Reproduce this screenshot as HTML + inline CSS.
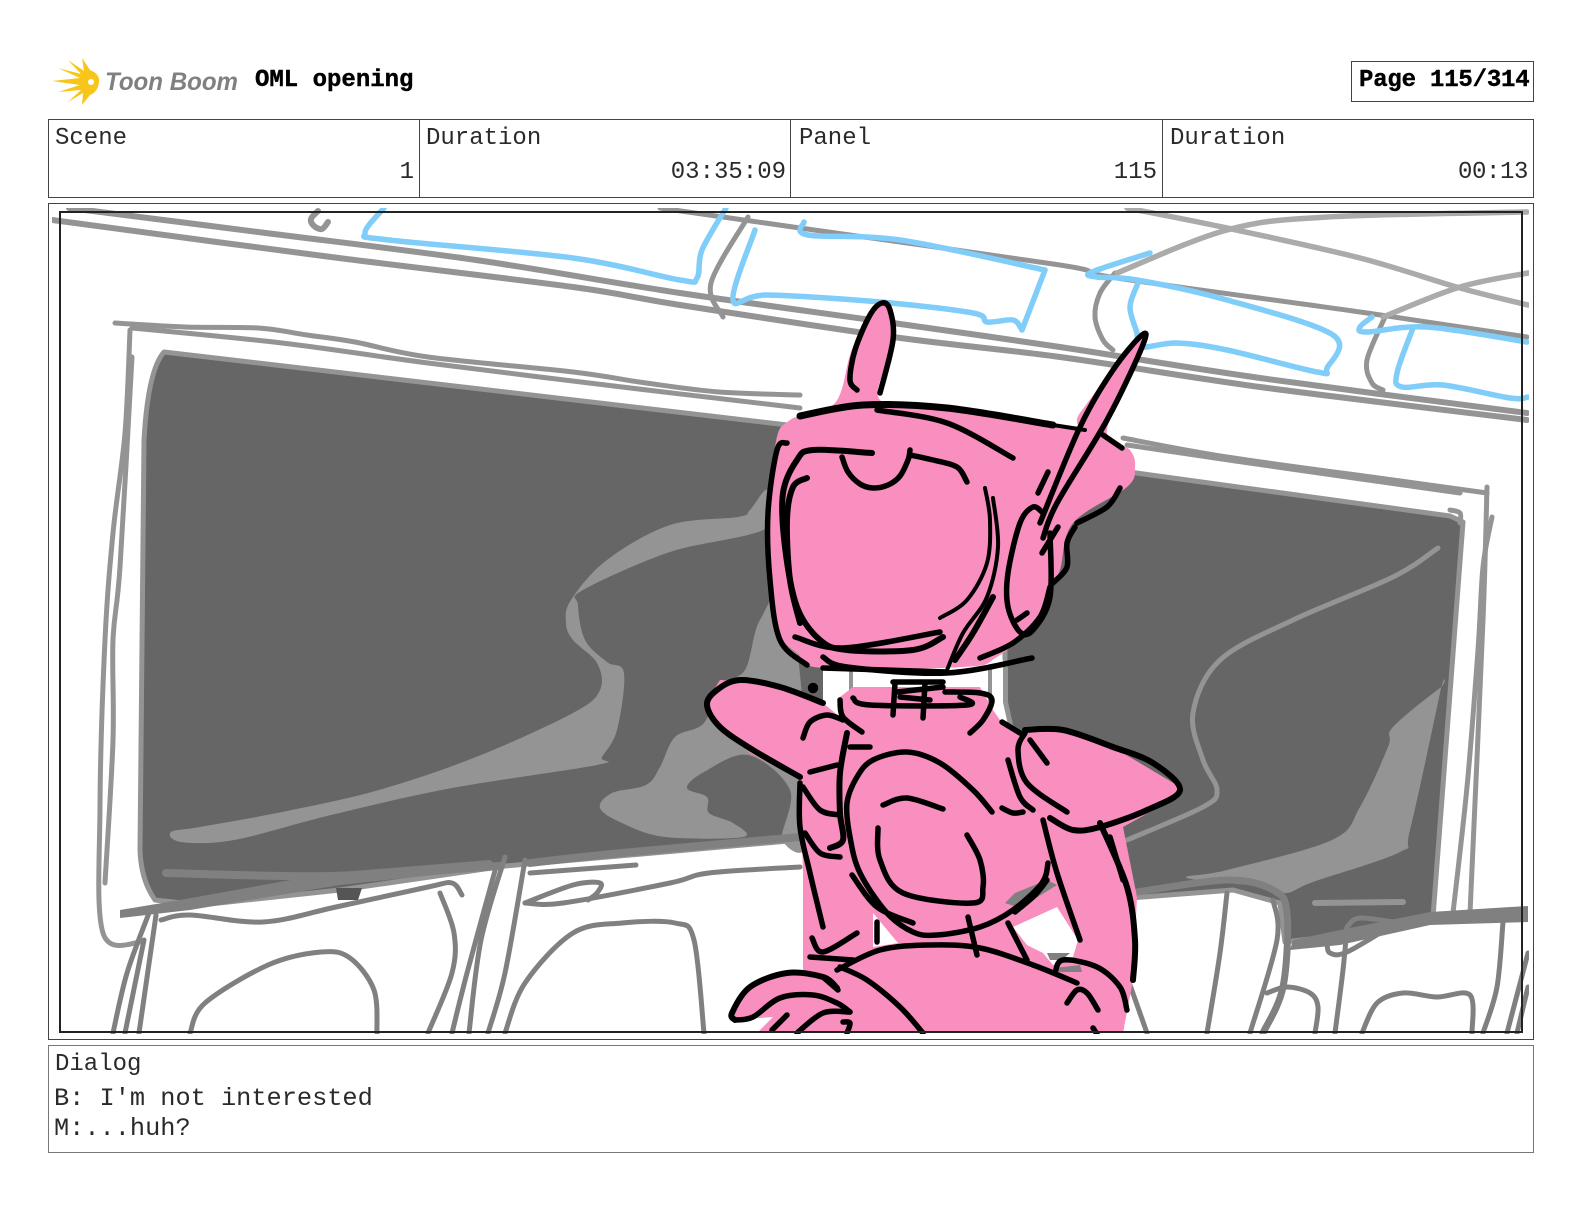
<!DOCTYPE html>
<html><head><meta charset="utf-8"><title>OML opening</title>
<style>
html,body{margin:0;padding:0;background:#fff;width:1584px;height:1224px;overflow:hidden}
body{position:relative;font-family:"Liberation Mono",monospace;color:#2a2a2a}
.b{position:absolute;box-sizing:border-box;border:1px solid #444}
.t{position:absolute;font-size:24px;line-height:28px;white-space:pre}
.h{font-weight:bold;color:#000;-webkit-text-stroke:.4px #000}
svg{position:absolute;left:0;top:0}
</style></head><body>
<svg id="logo" width="260" height="120" viewBox="0 0 260 120" style="left:0;top:0">
<path fill="#F8C61A" d="M52 81 80 78 58 68 81 74 68 60 84 71 82 58 90 70Q100 74 99 82 98 92 90 95L82 105 83 93 68 102 81 90 58 92 80 85Z"/>
<circle cx="91" cy="82" r="3" fill="#fff"/>
<text x="105" y="90" font-family="Liberation Sans" font-size="25" font-weight="bold" font-style="italic" fill="#808080" textLength="133" lengthAdjust="spacingAndGlyphs">Toon Boom</text>
</svg>
<div class="t h" style="left:255px;top:67px">OML opening</div>
<div class="b" style="left:1351px;top:61px;width:183px;height:41px"></div>
<div class="t h" style="left:1359px;top:67px;letter-spacing:-.2px">Page 115/314</div>

<div class="b" style="left:48px;top:119px;width:1486px;height:79px"></div>
<div style="position:absolute;left:419px;top:119px;width:1px;height:79px;background:#444"></div>
<div style="position:absolute;left:790px;top:119px;width:1px;height:79px;background:#444"></div>
<div style="position:absolute;left:1162px;top:119px;width:1px;height:79px;background:#444"></div>
<div class="t" style="left:55px;top:125px">Scene</div>
<div class="t" style="left:426px;top:125px">Duration</div>
<div class="t" style="left:799px;top:125px">Panel</div>
<div class="t" style="left:1170px;top:125px">Duration</div>
<div class="t" style="right:1170px;top:159px">1</div>
<div class="t" style="right:798px;top:159px">03:35:09</div>
<div class="t" style="right:427px;top:159px">115</div>
<div class="t" style="right:56px;top:159px;letter-spacing:-.4px">00:13</div>

<div class="b" style="left:48px;top:203px;width:1486px;height:837px"></div>
<svg id="art" width="1584" height="1224" viewBox="0 0 1584 1224">
<defs><clipPath id="c"><rect x="52" y="208" width="1477" height="826"/></clipPath></defs>
<g clip-path="url(#c)" fill="none" stroke-linecap="round" stroke-linejoin="round">

<!-- windows -->
<g fill="#666" stroke="#949494" stroke-width="5">
<path d="M164 352 830 430 823 838 505 866 340 890 200 905 155 900Q141 880 140 850L144 440Q148 370 164 352Z"/>
<path d="M1005 455 1450 516 1463 522 1433 917 1343 935 1285 942 1280 903 1233 890 1130 898 1050 900 1005 700Z"/>
</g>
<path fill="#fff" stroke="none" d="M823 660H1003V735H823Z"/>
<g stroke="#949494" stroke-width="4">
<path d="M851 668V705"/><path d="M990 668V705"/><path d="M1006 668V705"/>
</g>
<g fill="#949494" stroke="none">
<path class="s" d="M767 490 750 510 738 517 670 525 607 560 571 600 566 623 573 640 597 663 600 690 573 713 476 757 379 790 282 812 200 827 171 832 181 842 234 840 331 815 452 788 597 765 602 757 617 730 624 673 607 662 585 640 578 605 583 590 670 552 767 528Z"/>
<path class="s" d="M790 600 760 620 745 670 720 685 704 723 675 737 660 767 646 785 612 793 600 808 622 823 665 837 743 837 733 823 709 813 707 797 687 788 704 772 748 755 790 790 782 840 810 830Z"/>
<path class="s" d="M1440 688 1393 727 1388 747 1360 807 1332 840 1227 870 1187 878 1267 887 1287 893 1313 882 1400 852 1410 830 1440 693Z"/>
</g>
<g stroke="#949494" stroke-width="5">
<path class="s" d="M1438 548 1393 577 1293 620 1220 660 1193 713 1203 760 1217 790 1203 807 1127 840"/>
<path class="s" stroke-width="6" d="M1315 903 1403 902"/>
</g>

<!-- rails -->
<g stroke="#949494" stroke-width="6">
<path class="s" d="M52 220 331 257 573 287 680 305 893 337 1060 357 1260 387 1527 420"/>
<path class="s" d="M69 208 258 232 476 260 680 293 893 323 1060 347 1260 378 1527 413"/>
<path class="s" stroke-width="5" d="M660 208 800 228 1060 265 1117 278 1360 312 1527 337"/>
<path class="s" stroke-width="5" d="M1115 273 1100 293 1095 317 1103 340 1113 350"/>
<path class="s" stroke-width="5" d="M1385 317 1367 360 1372 383 1383 390"/>
<path class="s" stroke-width="5" d="M748 217 711 283 723 317"/>
<path class="s" d="M318 211 311 219 314 226 322 229 328 222"/>
</g>
<g stroke="#ababab" stroke-width="5.5">
<path class="s" d="M1117 273 1227 230 1327 217 1527 212"/>
<path class="s" d="M1127 208 1227 228 1360 258 1460 288 1528 305"/>
<path class="s" d="M1383 317 1460 287 1528 273"/>
</g>
<g stroke="#7FCDF8" stroke-width="5.5">
<path class="s" d="M384 208 365 233 389 240 573 258 680 280 697 278 702 250 726 208"/>
<path class="s" d="M755 230 733 300 767 295 880 302 973 313 987 322 1013 320 1022 330"/>
<path d="M1022 330 1045 270"/>
<path class="s" d="M1045 270 900 240 808 235 804 222"/>
<path class="s" d="M1150 253 1092 272 1097 277 1137 280 1227 300 1333 335 1327 368 1317 372 1227 350 1177 343 1140 347 1137 333 1130 307 1138 283"/>
<path class="s" d="M1372 317 1360 327 1367 332 1427 327 1527 342"/>
<path class="s" d="M1413 328 1397 373 1402 387 1443 385 1510 398 1528 397"/>
</g>

<!-- window frames -->
<g stroke="#949494" stroke-width="5">
<path class="s" d="M115 323 185 327 258 328 307 335 355 342 428 357 573 372 646 383 719 392 800 395"/>
<path class="s" d="M132 328 282 343 428 363 622 387 800 408"/>
<path class="s" d="M130 330 125 433 113 533 105 640 100 807 103 933 142 942"/>
<path class="s" d="M132 357 120 567 113 640 113 740 105 883"/>
<path class="s" d="M1123 438 1227 457 1393 480 1487 493"/>
<path class="s" d="M1127 445 1277 467 1460 493"/>
<path class="s" d="M1487 487 1483 620 1470 913"/>
<path class="s" d="M1492 517 1483 567 1478 650 1467 787 1453 913"/>
<path class="s" d="M1450 510 1460 513 1460 523"/>
</g>

<!-- seats -->
<g stroke="#808080" stroke-width="5">
<path class="s" stroke-width="8" d="M166 873 330 876 500 866"/>
<path fill="#808080" stroke="none" d="M120 910 180 900 330 873 490 860 500 868 340 885 190 910 120 918Z"/>
<path class="s" stroke-width="8" d="M530 863 622 853 800 837"/>
<path class="s" d="M161 920 190 915 263 922 336 907 428 887 452 883 462 895"/>
<path class="s" d="M440 893 454 933 452 973 428 1033"/>
<path class="s" d="M149 913 127 973 113 1033"/>
<path class="s" d="M156 915 139 1033"/>
<path class="s" d="M144 940 125 1033"/>
<path class="s" d="M190 1033 205 1003 268 965 321 952 350 958 374 990 377 1033"/>
<path class="s" d="M496 867 467 973 452 1033"/>
<path class="s" d="M505 857 481 940 469 1033"/>
<path class="s" d="M525 860 505 973 488 1033"/>
<path class="s" d="M525 903 563 903 670 883 709 873 800 867"/>
<path class="s" d="M525 903 573 885 600 883 597 893 588 900"/>
<path class="s" d="M530 873 636 865"/>
<path class="s" d="M505 1033 525 983 573 933 622 923 675 923 694 940 704 1033"/>
<path class="s" d="M1227 893 1220 953 1207 1033"/>
<path class="s" stroke-width="7" d="M1137 892 1227 880 1273 890 1287 913 1283 987 1263 1033"/>
<path class="s" d="M1273 900 1277 940 1250 1033"/>
<path class="s" d="M1347 927 1343 970 1335 1033"/>
<path class="s" d="M1327 943 1330 953 1347 952 1393 925"/>
<path class="s" d="M1347 927 1360 918 1400 923"/>
<path class="s" d="M1267 993 1287 987 1310 993 1318 1007 1315 1033"/>
<path class="s" d="M1362 1033 1377 1003 1403 993 1437 997 1470 995 1472 1033"/>
<path class="s" d="M1503 922 1497 987 1483 1033"/>
<path class="s" d="M1528 953 1507 1033"/>
<path class="s" d="M1528 987 1517 1033"/>
<path class="s" d="M1130 985 1147 1033"/>
<path fill="#808080" stroke="none" d="M1528 906V922L1430 925 1340 945 1290 950 1293 940 1340 930 1430 912Z"/>
<path fill="#555" stroke="none" d="M336 888H362L358 900H338Z"/>
</g>

<!-- pink figure -->
<g fill="#F88FBF" stroke="none">
<path class="s" d="M835 403 853 347 883 303 893 313 893 347 880 400 947 407 1070 427 1080 413 1137 337 1142 347 1107 430 1130 450 1135 467 1127 487 1073 523 1060 570 1050 587 1040 620 997 657 963 667 823 668 797 653 777 627 768 547 775 447 790 420Z"/>
<path d="M840 697 853 687H980L993 710 1000 720 1020 733 1047 728 1113 747 1180 787 1177 797 1123 827 1137 897 1133 980 1123 1033H757L773 1017 733 1020 733 1007 753 983 803 970 803 873 800 780 750 753 710 717 707 700 720 680 763 682 823 703 840 717Z"/>
</g>
<g stroke="none">
<path fill="#fff" d="M1013 927 1057 907 1078 940 1073 957 1053 965 1043 953 1027 945Z"/>
<path fill="#fff" d="M873 913 898 943 873 947Z"/>
<path fill="#808080" d="M1005 903 1015 893 1047 880 1057 885 1020 908Z"/>
<path fill="#808080" d="M1047 953H1070L1062 960H1050ZM1055 968 1080 965 1082 972H1060Z"/>
</g>

<!-- black ink -->
<g stroke="#000" stroke-width="5.5">
<path class="s" d="M857 390 850 380 855 350 870 315 882 303 890 310 893 340 880 393"/>
<path class="s" stroke-width="7" d="M800 416 863 405 947 408 1053 425"/>
<path class="s" stroke-width="4" d="M1053 425 1085 430"/>
<path class="s" d="M877 410 947 423 1013 458"/>
<path class="s" d="M1040 523 1080 427 1113 370 1142 335 1142 347 1107 420 1057 503 1043 538"/>
<path class="s" d="M787 443 777 450 768 513 770 580 780 640 807 665"/>
<path class="s" stroke-width="6" d="M872 453 813 450 797 460 783 493 785 547 797 607 820 640 847 650 913 650 943 637"/>
<path class="s" stroke-width="6" d="M807 478 793 487 787 520 790 580 800 623"/>
<path class="s" d="M795 637 843 648 940 632"/>
<path class="s" d="M823 657 847 667 947 673 1032 658"/>
<path class="s" d="M842 457 848 472 860 484 873 488 888 485 900 476 908 460 910 450"/>
<path class="s" d="M910 455 933 460 957 467 967 482"/>
<path class="s" stroke-width="4" d="M985 488 990 520 987 563 967 600 940 618"/>
<path class="s" stroke-width="4" d="M993 498 998 547 987 597 963 633 947 670"/>
<path class="s" stroke-width="6" d="M993 597 973 633 955 660"/>
<path class="s" d="M1043 513 1033 507 1020 523 1008 573 1008 607 1020 632 1033 630 1050 597 1050 533"/>
<path class="s" d="M1027 613 1017 620"/>
<path class="s" d="M1050 587 1040 617 1013 643 980 658"/>
<path class="s" d="M1042 553 1058 527"/>
<path class="s" d="M1075 527 1067 543 1067 567 1053 583"/>
<path class="s" d="M1120 488 1107 507 1077 523"/>
<path class="s" d="M1103 435 1122 448"/>
<path class="s" d="M1048 472 1038 493"/>
<!-- neck -->
<path class="s" d="M853 698 870 705 967 705 960 697"/>
<path class="s" d="M945 692 980 693 992 700 983 720 970 733"/>
<path class="s" d="M840 700 843 717 862 732"/>
<path class="s" d="M895 683 893 715"/>
<path class="s" d="M925 683 923 718"/>
<path class="s" d="M893 682 943 682"/>
<path class="s" d="M897 692 943 687"/>
<path class="s" d="M900 697 930 700"/>
<path class="s" d="M823 668 947 672"/>
<circle cx="813" cy="688" r="2.5" fill="#000"/>
<!-- left arm -->
<path class="s" stroke-width="6" d="M823 703 780 687 740 680 717 690 707 705 720 727 753 750 800 777"/>
<path class="s" d="M803 738 810 722 827 715 843 720"/>
<path class="s" d="M810 772 837 765"/>
<path class="s" stroke-width="6" d="M847 733 840 773 840 813 843 840 830 848"/>
<path class="s" d="M850 747 870 747"/>
<path class="s" d="M803 787 820 810 840 815"/>
<path class="s" d="M800 783 800 827 810 873 823 927"/>
<path class="s" d="M805 833 820 853 840 857"/>
<path class="s" d="M812 938 823 952 857 933"/>
<path class="s" d="M810 957 853 960"/>
<!-- torso circle -->
<path class="s" d="M992 812 973 790 940 763 907 752 873 760 857 777 847 803 850 837 860 873 887 913 913 932 937 935 980 927 1013 910 1042 883 1048 863"/>
<path class="s" d="M852 875 877 907 913 923"/>
<path class="s" d="M883 805 907 798 943 809"/>
<path class="s" d="M878 828 880 860 903 893 973 903 983 887 980 860 967 835"/>
<path class="s" d="M1002 808 1013 813 1023 812"/>
<path class="s" d="M1008 760 1020 797 1033 810"/>
<path class="s" d="M1002 722 1020 733"/>
<!-- right arm -->
<path class="s" stroke-width="6" d="M1025 730 1063 730 1113 747 1153 763 1180 790 1147 810 1100 827 1073 830 1050 818"/>
<path class="s" d="M1025 733 1018 750 1027 783 1067 812"/>
<path class="s" d="M1030 740 1047 763"/>
<path class="s" d="M1043 820 1057 873 1080 940"/>
<path class="s" stroke-width="6" d="M1100 823 1127 887 1135 940 1133 980"/>
<path class="s" d="M1110 837 1123 880"/>
<path class="s" d="M877 922 877 942"/>
<path class="s" d="M968 917 977 955"/>
<path class="s" d="M1008 923 1027 960"/>
<path class="s" d="M1047 880 1035 895 1015 912"/>
<!-- belly and hand -->
<path class="s" d="M837 970 880 950 930 945 980 948 1033 965 1077 983"/>
<path class="s" d="M1055 973 1063 960 1097 967 1120 987 1127 1010"/>
<path class="s" d="M1067 1003 1077 990 1087 993 1098 1010"/>
<path class="s" d="M1093 1028 1097 1034"/>
<path class="s" stroke-width="6" d="M735 1020 732 1013 750 987 787 973 823 977 837 988"/>
<path class="s" d="M735 1020 753 1017 780 998 813 995 837 1003 850 1012"/>
<path class="s" d="M840 967 867 980 900 1007 923 1033"/>
<path class="s" d="M772 1030 787 1015"/>
<path class="s" d="M797 1033 823 1013 850 1012"/>
<path class="s" d="M843 1022 850 1023 847 1033"/>
<path class="s" d="M823 977 838 990"/>
</g>
</g>
<rect x="60" y="212" width="1462" height="820" fill="none" stroke="#222" stroke-width="2"/>
</svg>

<div class="b" style="left:48px;top:1045px;width:1486px;height:108px;border-color:#777"></div>
<div class="t" style="left:55px;top:1051px">Dialog</div>
<div class="t" style="left:54px;top:1085px;font-size:25.3px">B: I'm not interested</div>
<div class="t" style="left:54px;top:1115px;font-size:25.3px">M:...huh?</div>

<script>
document.querySelectorAll('#art path.s').forEach(function(p){
  var d=p.getAttribute('d'),closed=/Z\s*$/.test(d),n=d.match(/-?[\d.]+/g).map(Number),q=[];
  for(var i=0;i<n.length;i+=2)q.push([n[i],n[i+1]]);
  var L=q.length,o='M'+q[0][0]+' '+q[0][1];
  function g(i){return closed?q[(i+L)%L]:q[Math.max(0,Math.min(L-1,i))]}
  for(i=0;i<(closed?L:L-1);i++){
    var a=g(i-1),b=g(i),c=g(i+1),e=g(i+2);
    o+='C'+(b[0]+(c[0]-a[0])/6).toFixed(1)+' '+(b[1]+(c[1]-a[1])/6).toFixed(1)+' '+
      (c[0]-(e[0]-b[0])/6).toFixed(1)+' '+(c[1]-(e[1]-b[1])/6).toFixed(1)+' '+c[0]+' '+c[1];
  }
  p.setAttribute('d',o+(closed?'Z':''));
});
</script>
</body></html>
